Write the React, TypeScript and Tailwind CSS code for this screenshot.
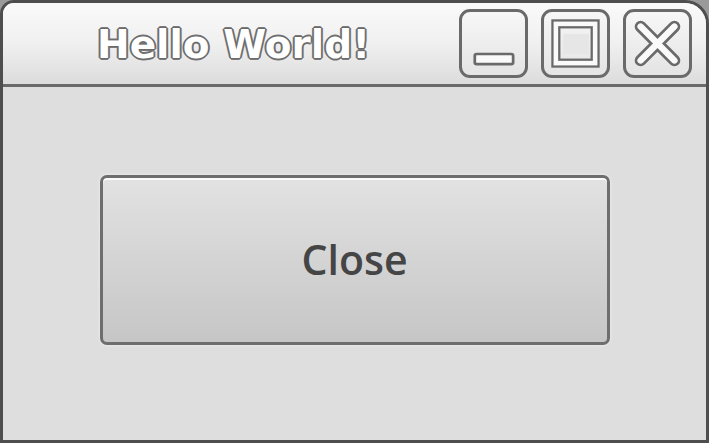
export default function App() {
  const titleShadow =
    '0 0 1px #6b6b6b, 1px 1px 0 #6b6b6b, -1px -1px 0 #6b6b6b, 1px -1px 0 #6b6b6b, -1px 1px 0 #6b6b6b, 2px 0 0 #7a7a7a, -2px 0 0 #7a7a7a, 0 2px 0 #7a7a7a, 0 -2px 0 #7a7a7a'

  return (
    <div className="w-[709px] h-[443px] bg-[#9a9a9a] overflow-hidden">
      <div className="w-full h-full flex flex-col border-[3px] border-[#4e4e4e] rounded-tl-[14px] rounded-tr-[24px] overflow-hidden bg-[#dedede]">
        {/* title bar */}
        <div className="h-[84px] shrink-0 flex items-center bg-gradient-to-b from-[#fafafa] via-[#f0f0f0] to-[#dcdcdc] border-b-[3px] border-[#6a6a6a]">
          <div
            className="ml-[94px] mt-[4px] text-[39px] font-bold text-white [font-family:'DejaVu_Sans',sans-serif]"
            style={{ textShadow: titleShadow }}
          >
            Hello World!
          </div>
          <div className="ml-auto mr-[14px] flex gap-[13px]">
            <WinButton>
              <svg width="69" height="69" viewBox="0 0 69 69">
                <rect x="14" y="46" width="42" height="11" rx="2" fill="#fafafa" stroke="#6a6a6a" strokeWidth="3" />
              </svg>
            </WinButton>
            <WinButton>
              <svg width="69" height="69" viewBox="0 0 69 69">
                <rect x="13" y="13" width="43" height="43" fill="none" stroke="#6a6a6a" strokeWidth="10" />
                <rect x="13" y="13" width="43" height="43" fill="none" stroke="#fafafa" strokeWidth="5" />
                <rect x="21" y="24" width="28" height="22" fill="#e6e6e6" />
              </svg>
            </WinButton>
            <WinButton>
              <svg width="69" height="69" viewBox="0 0 69 69">
                <path d="M16 16 L53 53 M53 16 L16 53" stroke="#6a6a6a" strokeWidth="13" strokeLinecap="round" />
                <path d="M16 16 L53 53 M53 16 L16 53" stroke="#fafafa" strokeWidth="7" strokeLinecap="round" />
              </svg>
            </WinButton>
          </div>
        </div>

        {/* body */}
        <div className="flex-1 flex items-center justify-center pb-[8px]">
          <button className="w-[510px] h-[170px] rounded-[7px] border-[3px] border-[#6e6e6e] bg-gradient-to-b from-[#e2e2e2] to-[#c6c6c6] shadow-[inset_0_2px_0_#fbfbfb,0_0_3px_#f4f4f4] flex items-center justify-center">
            <span className="text-[41px] font-semibold text-[#454545] [font-family:'Open_Sans',sans-serif]">Close</span>
          </button>
        </div>
      </div>
    </div>
  )
}

function WinButton({ children }: { children: React.ReactNode }) {
  return (
    <div className="w-[69px] h-[69px] rounded-[11px] border-[3px] border-[#6a6a6a] bg-gradient-to-b from-[#f7f7f7] to-[#e4e4e4] flex items-center justify-center overflow-hidden">
      {children}
    </div>
  )
}
